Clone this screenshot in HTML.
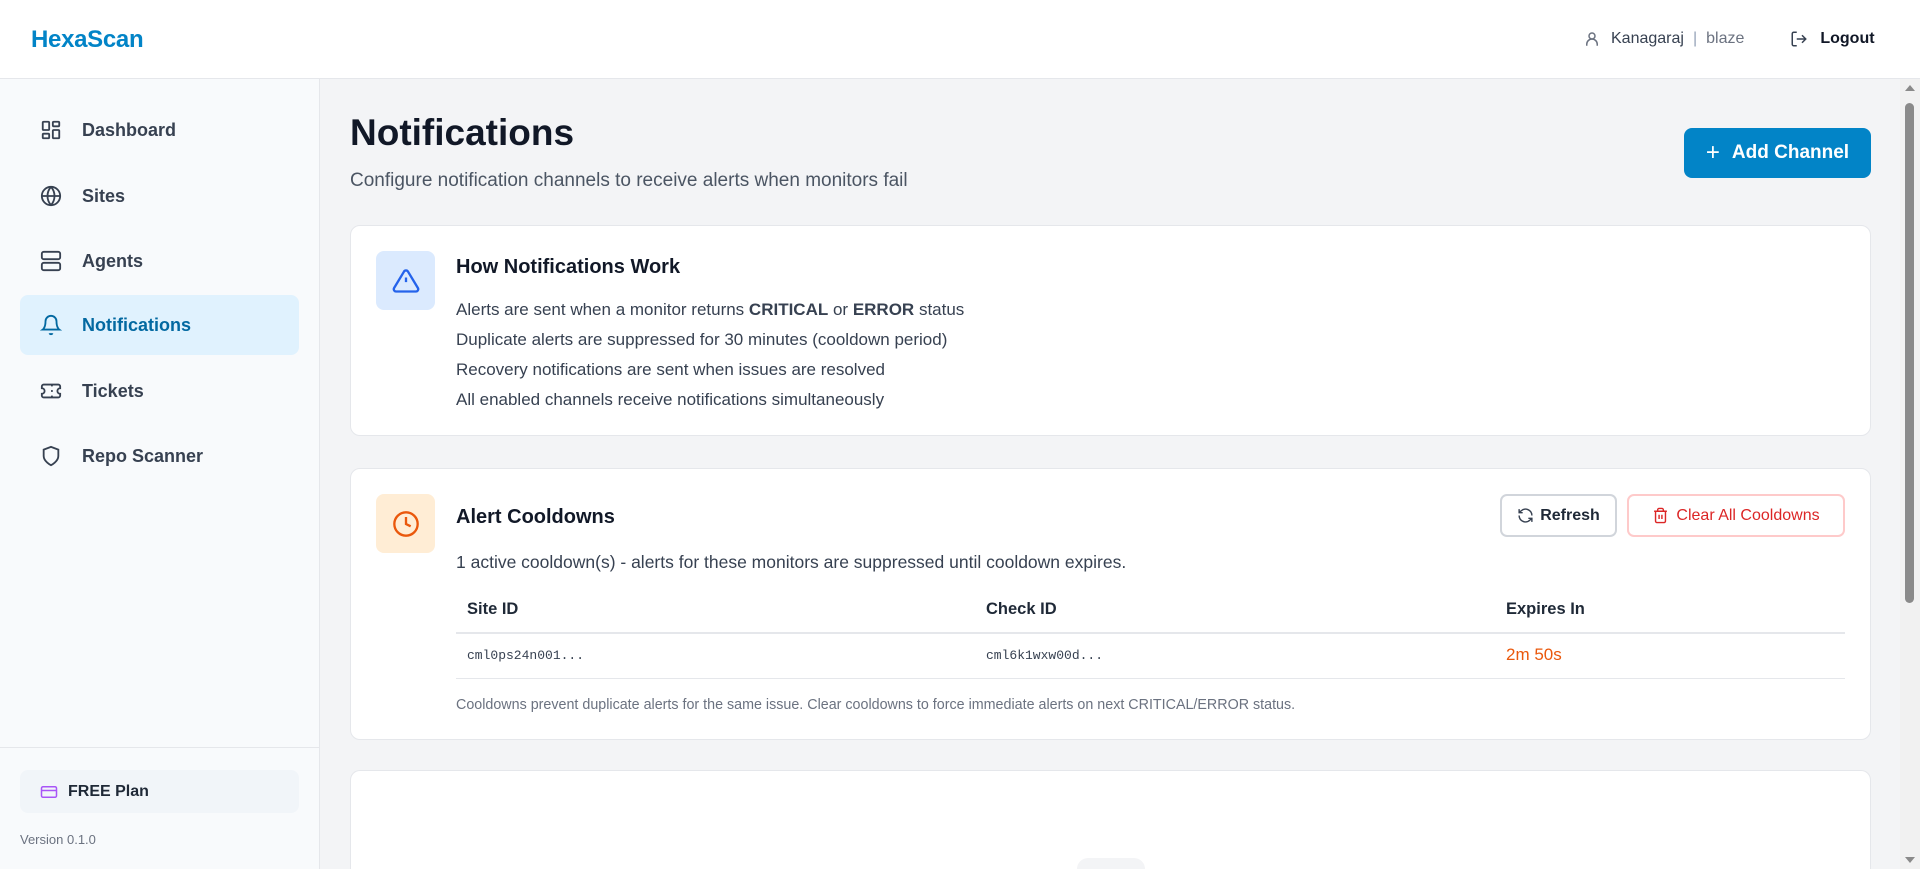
<!DOCTYPE html>
<html style="overflow:hidden"><head><meta charset="utf-8"><style>
*{box-sizing:border-box;margin:0;padding:0}
html,body{width:1920px;height:869px;overflow:hidden}
body{font-family:"Liberation Sans",sans-serif;background:#f3f4f6;position:relative;color:#111827}
.hdr{position:absolute;left:0;top:0;width:1920px;height:79px;background:#fff;border-bottom:1px solid #e5e7eb}
.logo{position:absolute;left:31px;top:26px;font-size:24px;font-weight:700;color:#0284c7;letter-spacing:-0.3px}
.user{position:absolute;left:1583px;top:30px;font-size:16px;color:#374151;display:flex;align-items:center}
.side{position:absolute;left:0;top:79px;width:320px;height:790px;background:#f8fafc;border-right:1px solid #e5e7eb}
.nav{position:absolute;left:20px;width:279px;height:60px;display:flex;align-items:center;padding-left:20px;font-size:18px;font-weight:700;color:#374151;border-radius:8px}
.nav svg{margin-right:20px}
.nav.act{background:#e0f2fe;color:#0369a1}
.main{position:absolute;left:350px}
.card{position:absolute;left:350px;width:1521px;background:#fff;border:1px solid #e5e7eb;border-radius:10px}
.ibox{position:absolute;left:25px;width:59px;height:59px;border-radius:8px;display:flex;align-items:center;justify-content:center}
.t{position:absolute;left:105px;font-size:20px;font-weight:600;color:#111827}
.ln{position:absolute;left:105px;font-size:17px;color:#374151}
.btn{position:absolute;height:43px;border-radius:7px;display:flex;align-items:center;justify-content:center;font-size:16px;font-weight:600;background:#fff}
</style></head><body>
<div class="hdr">
<div class="logo">HexaScan</div>
<div class="user">
<svg width="18" height="18" viewBox="0 0 24 24" fill="none" stroke="#6b7280" stroke-width="2"><circle cx="12" cy="8" r="4"/><path d="M5 21v-2a7 7 0 0 1 14 0v2"/></svg>
<span style="margin-left:10px">Kanagaraj</span><span style="margin:0 9px;color:#94a3b8">|</span><span style="color:#6b7280">blaze</span>
<svg style="margin-left:46px" width="18" height="18" viewBox="0 0 24 24" fill="none" stroke="#374151" stroke-width="2"><path d="M9 21H5a2 2 0 0 1-2-2V5a2 2 0 0 1 2-2h4M16 17l5-5-5-5M21 12H9"/></svg>
<span style="margin-left:12px;font-weight:700;color:#111827">Logout</span>
</div>
</div>
<div class="side">
<div class="nav" style="top:21px"><svg width="22" height="22" viewBox="0 0 24 24" fill="none" stroke="#374151" stroke-width="2"><rect x="3" y="3" width="7" height="9" rx="1"/><rect x="14" y="3" width="7" height="5" rx="1"/><rect x="14" y="12" width="7" height="9" rx="1"/><rect x="3" y="16" width="7" height="5" rx="1"/></svg>Dashboard</div>
<div class="nav" style="top:87px"><svg width="22" height="22" viewBox="0 0 24 24" fill="none" stroke="#374151" stroke-width="2"><circle cx="12" cy="12" r="10"/><path d="M2 12h20M12 2a15 15 0 0 1 0 20M12 2a15 15 0 0 0 0 20"/></svg>Sites</div>
<div class="nav" style="top:152px"><svg width="22" height="22" viewBox="0 0 24 24" fill="none" stroke="#374151" stroke-width="2"><rect x="2" y="2" width="20" height="8" rx="2"/><rect x="2" y="14" width="20" height="8" rx="2"/><path d="M6 6h.01M6 18h.01"/></svg>Agents</div>
<div class="nav act" style="top:216px"><svg width="22" height="22" viewBox="0 0 24 24" fill="none" stroke="#0369a1" stroke-width="2"><path d="M6 8a6 6 0 0 1 12 0c0 7 3 9 3 9H3s3-2 3-9M10.3 21a1.9 1.9 0 0 0 3.4 0"/></svg>Notifications</div>
<div class="nav" style="top:282px"><svg width="22" height="22" viewBox="0 0 24 24" fill="none" stroke="#374151" stroke-width="2"><path d="M2 9a3 3 0 0 1 0 6v2a2 2 0 0 0 2 2h16a2 2 0 0 0 2-2v-2a3 3 0 0 1 0-6V7a2 2 0 0 0-2-2H4a2 2 0 0 0-2 2Z"/><path d="M13 5v2M13 17v2M13 11v2"/></svg>Tickets</div>
<div class="nav" style="top:347px"><svg width="22" height="22" viewBox="0 0 24 24" fill="none" stroke="#374151" stroke-width="2"><path d="M12 22s8-4 8-10V5l-8-3-8 3v7c0 6 8 10 8 10z"/></svg>Repo Scanner</div>
<div style="position:absolute;left:0;top:668px;width:320px;border-top:1px solid #e5e7eb"></div>
<div style="position:absolute;left:20px;top:691px;width:279px;height:43px;background:#f1f5f9;border-radius:8px;display:flex;align-items:center;padding-left:20px;font-size:16px;font-weight:600;color:#1f2937"><svg width="18" height="18" viewBox="0 0 24 24" fill="none" stroke="#a855f7" stroke-width="2" style="margin-right:10px"><rect x="2" y="5" width="20" height="14" rx="2"/><path d="M2 10h20"/></svg>FREE Plan</div>
<div style="position:absolute;left:20px;top:753px;font-size:13px;color:#6b7280">Version 0.1.0</div>
</div>
<div style="position:absolute;left:1900px;top:79px;width:20px;height:790px;background:#f1f1f1"><div style="position:absolute;left:5px;top:24px;width:9px;height:500px;background:#8a8a8a;border-radius:5px"></div><div style="position:absolute;left:5px;top:6px;border:5px solid transparent;border-bottom:6px solid #8a8a8a;border-top:0"></div><div style="position:absolute;left:5px;bottom:6px;border:5px solid transparent;border-top:6px solid #8a8a8a;border-bottom:0"></div></div>
<div class="main" style="top:112px;font-size:37px;font-weight:700;color:#111827">Notifications</div>
<div class="main" style="top:170px;font-size:19px;color:#4b5563">Configure notification channels to receive alerts when monitors fail</div>
<div class="btn" style="left:1684px;top:128px;width:187px;height:50px;background:#0284c7;color:#fff;font-size:19px;border-radius:8px"><span style="font-size:24px;font-weight:400;margin-right:12px">+</span>Add Channel</div>
<div class="card" style="top:225px;height:211px">
<div class="ibox" style="top:25px;background:#dbeafe"><svg width="28" height="28" viewBox="0 0 24 24" fill="none" stroke="#2563eb" stroke-width="2"><path d="M10.3 3.9 1.8 18a2 2 0 0 0 1.7 3h17a2 2 0 0 0 1.7-3L13.7 3.9a2 2 0 0 0-3.4 0zM12 9v4M12 17h.01"/></svg></div>
<div class="t" style="top:30px">How Notifications Work</div>
<div class="ln" style="top:74px">Alerts are sent when a monitor returns <b>CRITICAL</b> or <b>ERROR</b> status</div>
<div class="ln" style="top:104px">Duplicate alerts are suppressed for 30 minutes (cooldown period)</div>
<div class="ln" style="top:134px">Recovery notifications are sent when issues are resolved</div>
<div class="ln" style="top:164px">All enabled channels receive notifications simultaneously</div>
</div>
<div class="card" style="top:468px;height:272px">
<div class="ibox" style="top:25px;background:#ffedd5"><svg width="28" height="28" viewBox="0 0 24 24" fill="none" stroke="#ea580c" stroke-width="2"><circle cx="12" cy="12" r="10"/><path d="M12 6v6l4 2"/></svg></div>
<div class="t" style="top:37px">Alert Cooldowns</div>
<div class="btn" style="left:1149px;top:25px;width:117px;border:2px solid #d1d5db;color:#1f2937"><svg width="17" height="17" viewBox="0 0 24 24" fill="none" stroke="#374151" stroke-width="2" style="margin-right:6px"><path d="M21 12a9 9 0 0 0-15-6.7L3 8M3 3v5h5M3 12a9 9 0 0 0 15 6.7l3-2.7M21 21v-5h-5"/></svg>Refresh</div>
<div class="btn" style="left:1276px;top:25px;width:218px;border:2px solid #fecaca;color:#dc2626;font-weight:500"><svg width="17" height="17" viewBox="0 0 24 24" fill="none" stroke="#dc2626" stroke-width="2" style="margin-right:7px"><path d="M3 6h18M19 6v14a2 2 0 0 1-2 2H7a2 2 0 0 1-2-2V6M8 6V4a2 2 0 0 1 2-2h4a2 2 0 0 1 2 2v2M10 11v6M14 11v6"/></svg>Clear All Cooldowns</div>
<div class="ln" style="top:83px;font-size:17.5px">1 active cooldown(s) - alerts for these monitors are suppressed until cooldown expires.</div>
<div style="position:absolute;left:105px;top:131px;width:1389px;height:34px;border-bottom:2px solid #e5e7eb;font-size:16.5px;font-weight:600;color:#1f2937">
<span style="position:absolute;left:11px">Site ID</span><span style="position:absolute;left:530px">Check ID</span><span style="position:absolute;left:1050px">Expires In</span></div>
<div style="position:absolute;left:105px;top:165px;width:1389px;height:45px;border-bottom:1px solid #e5e7eb">
<span style="position:absolute;left:11px;top:14px;font-family:'Liberation Mono',monospace;font-size:13px;color:#374151">cml0ps24n001...</span>
<span style="position:absolute;left:530px;top:14px;font-family:'Liberation Mono',monospace;font-size:13px;color:#374151">cml6k1wxw00d...</span>
<span style="position:absolute;left:1050px;top:11px;font-size:17px;color:#ea580c">2m 50s</span></div>
<div style="position:absolute;left:105px;top:228px;font-size:14.3px;color:#6b7280">Cooldowns prevent duplicate alerts for the same issue. Clear cooldowns to force immediate alerts on next CRITICAL/ERROR status.</div>
</div>
<div class="card" style="top:770px;height:99px;overflow:hidden;border-bottom:none;border-radius:10px 10px 0 0"><div style="position:absolute;left:726px;top:87px;width:68px;height:11px;border-radius:34px 34px 0 0;background:#f3f4f6"></div></div>
</body></html>
